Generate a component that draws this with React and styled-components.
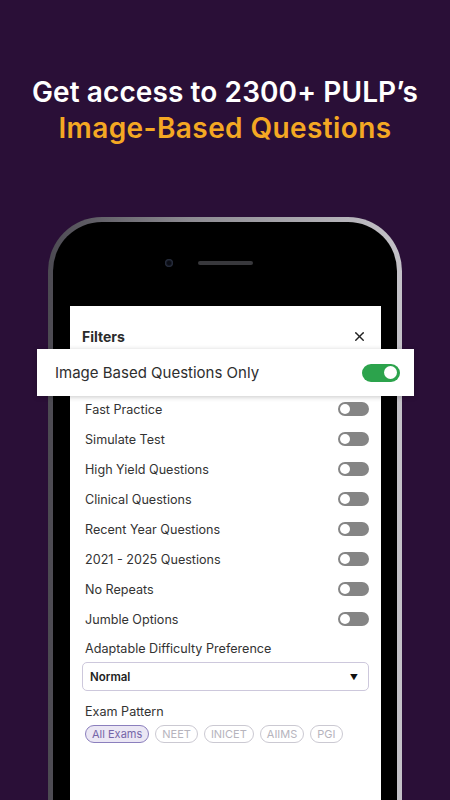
import styled, { createGlobalStyle } from 'styled-components';
import { X } from 'lucide-react';

const filterRows = [
  'Fast Practice',
  'Simulate Test',
  'High Yield Questions',
  'Clinical Questions',
  'Recent Year Questions',
  '2021 - 2025 Questions',
  'No Repeats',
  'Jumble Options',
];

const exams = ['All Exams', 'NEET', 'INICET', 'AIIMS', 'PGI'];

const GlobalStyle = createGlobalStyle`
  html, body {
    margin: 0;
    padding: 0;
    background: #2a0f37;
  }
  * {
    box-sizing: border-box;
  }
`;

const App = () => {
  return (
    <>
      <GlobalStyle />
      <Page>
        <Headline>
          <Line>Get access to 2300+ PULP’s</Line>
          <Line $accent>Image-Based Questions</Line>
        </Headline>

        <PhoneFrame>
          <Bezel>
            <Sensors>
              <Camera />
              <Speaker />
              <Spacer />
            </Sensors>
            <Screen>
              <SheetHeader>
                <Title>Filters</Title>
                <X size={15} strokeWidth={2.2} color="#222" />
              </SheetHeader>

              <HighlightCard>
                <HighlightText>Image Based Questions Only</HighlightText>
                <Toggle $on />
              </HighlightCard>

              <RowList>
                {filterRows.map((label) => (
                  <Row key={label}>
                    <RowLabel>{label}</RowLabel>
                    <Toggle />
                  </Row>
                ))}
              </RowList>

              <FieldLabel>Adaptable Difficulty Preference</FieldLabel>
              <Select>
                <span>Normal</span>
                <Arrow>▼</Arrow>
              </Select>

              <FieldLabel $gap={12}>Exam Pattern</FieldLabel>
              <Chips>
                {exams.map((exam, i) => (
                  <Chip key={exam} $active={i === 0}>
                    {exam}
                  </Chip>
                ))}
              </Chips>
            </Screen>
          </Bezel>
        </PhoneFrame>
      </Page>
    </>
  );
};

const Page = styled.div`
  width: 450px;
  height: 800px;
  overflow: hidden;
  background: #2a0f37;
  font-family: Inter, 'Open Sans', sans-serif;
`;

const Headline = styled.div`
  padding-top: 74px;
  text-align: center;
`;

const Line = styled.div`
  font-size: 28px;
  line-height: 36px;
  font-weight: 600;
  letter-spacing: ${(p) => (p.$accent ? '0.4px' : '0.1px')};
  color: ${(p) => (p.$accent ? '#f4a823' : '#ffffff')};
`;

const PhoneFrame = styled.div`
  width: 354px;
  margin: 71px auto 0;
  padding: 5px 5px 0;
  border-radius: 54px 54px 0 0;
  background: linear-gradient(90deg, #4c4a52 0%, #8d8b92 40%, #c4c2c8 100%);
  height: 700px;
`;

const Bezel = styled.div`
  height: 100%;
  background: #000;
  border-radius: 49px 49px 0 0;
  padding: 37px 16px 0 17px;
`;

const Sensors = styled.div`
  display: flex;
  align-items: center;
  justify-content: center;
  gap: 25px;
  height: 8px;
  margin-bottom: 39px;
`;

const Camera = styled.div`
  width: 8px;
  height: 8px;
  border-radius: 50%;
  background: radial-gradient(circle, #0a0c14 30%, #2d3446 70%);
`;

const Speaker = styled.div`
  width: 55px;
  height: 4px;
  border-radius: 2px;
  background: #38383c;
`;

const Spacer = styled.div`
  width: 8px;
`;

const Screen = styled.div`
  background: #fff;
  height: 600px;
  padding: 20px 12px 0;
  color: #333;
`;

const SheetHeader = styled.div`
  display: flex;
  align-items: center;
  justify-content: space-between;
  height: 20px;
  padding-right: 2px;
`;

const Title = styled.div`
  font-size: 14px;
  font-weight: 700;
  color: #2b2b2b;
`;

const HighlightCard = styled.div`
  display: flex;
  align-items: center;
  justify-content: space-between;
  height: 47px;
  margin: 3px -45px -2px;
  padding: 0 14px 0 18px;
  background: #fff;
  box-shadow: 0 1px 5px rgba(0, 0, 0, 0.22);
  position: relative;
`;

const HighlightText = styled.span`
  font-size: 15px;
  color: #2e2e2e;
`;

const Toggle = styled.span`
  position: relative;
  flex: none;
  width: ${(p) => (p.$on ? 38 : 31)}px;
  height: ${(p) => (p.$on ? 18 : 14)}px;
  border-radius: 9px;
  background: ${(p) => (p.$on ? '#2ca34c' : '#858585')};

  &::after {
    content: '';
    position: absolute;
    top: 2px;
    ${(p) => (p.$on ? 'right: 3px;' : 'left: 2px;')}
    width: ${(p) => (p.$on ? 13 : 10)}px;
    height: ${(p) => (p.$on ? 13 : 10)}px;
    margin-top: ${(p) => (p.$on ? 0.5 : 0)}px;
    border-radius: 50%;
    background: #fff;
  }
`;

const RowList = styled.div`
  display: flex;
  flex-direction: column;
`;

const Row = styled.div`
  display: flex;
  align-items: center;
  justify-content: space-between;
  height: 30px;
  padding-left: 3px;
`;

const RowLabel = styled.span`
  font-size: 12.6px;
  color: #333;
`;

const FieldLabel = styled.div`
  margin-top: ${(p) => p.$gap || 6}px;
  padding-left: 3px;
  font-size: 12.6px;
  line-height: 18px;
  color: #333;
`;

const Select = styled.div`
  display: flex;
  align-items: center;
  justify-content: space-between;
  height: 29px;
  margin-top: 4px;
  padding: 0 10px 0 7px;
  border: 1px solid #cdc8dc;
  border-radius: 5px;
  font-size: 11.5px;
  font-weight: 600;
  color: #222;
`;

const Arrow = styled.span`
  font-size: 8px;
  color: #111;
`;

const Chips = styled.div`
  display: flex;
  gap: 6px;
  margin-top: 4px;
  padding-left: 3px;
`;

const Chip = styled.span`
  display: inline-flex;
  align-items: center;
  height: 18px;
  padding: 0 6px;
  border-radius: 9px;
  font-size: 11px;
  border: 1px solid ${(p) => (p.$active ? '#8b7fbd' : '#cbc9d2')};
  background: ${(p) => (p.$active ? '#ebe7f4' : '#fff')};
  color: ${(p) => (p.$active ? '#7565a8' : '#b6b4bd')};
`;

export default App;
